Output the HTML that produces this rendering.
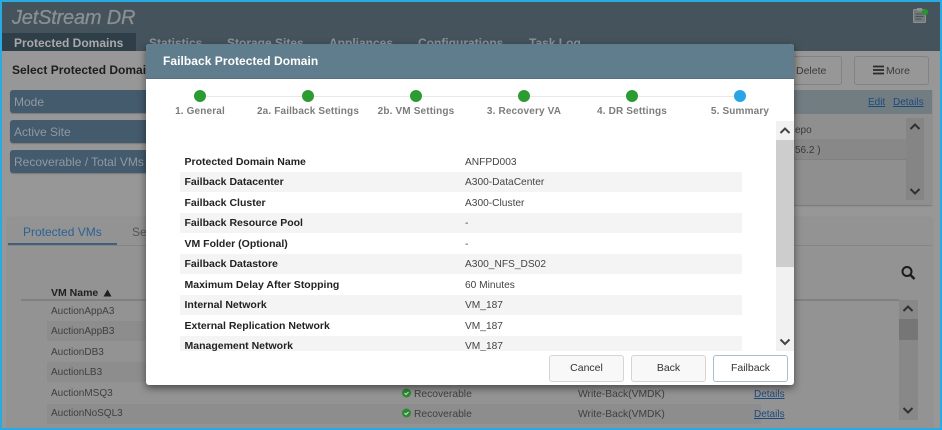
<!DOCTYPE html>
<html><head><meta charset="utf-8">
<style>
html,body{margin:0;padding:0;width:942px;height:430px;overflow:hidden;background:#979797}
body{font-family:"Liberation Sans",sans-serif;font-size:11px;color:#3a3a3a}
#w{position:absolute;left:0;top:0;width:942px;height:430px;overflow:hidden;background:#979797;filter:blur(.35px)}
.a{position:absolute;white-space:nowrap}
.bar{position:absolute;left:10px;width:140px;height:23px;background:#445a6d;border-radius:3px;color:#8f9aa3;font-size:12px;line-height:25px;padding-left:4px;box-sizing:border-box;box-shadow:0 1px 1px #7a7a7a}
.nav{position:absolute;top:36px;font-size:12px;font-weight:bold;color:#8a949a;white-space:nowrap}
.vm{position:absolute;left:51px;font-size:10px;color:#3f3f3f;white-space:nowrap}
.st{position:absolute;left:47px;width:714px;height:20px;background:#8d8d8d}
.lk{position:absolute;color:#1d4a7e;text-decoration:underline;font-size:10px;white-space:nowrap}
#modal{position:absolute;left:146px;top:44px;width:648px;height:341px;background:#fff;border-radius:3px;box-shadow:0 3px 8px rgba(0,0,0,.5);overflow:hidden}
#mh{position:absolute;left:0;top:0;width:648px;height:35px;background:#5f7d8c;border-bottom:1px solid #59717f;box-sizing:border-box;color:#fff;font-weight:bold;font-size:12px;line-height:34px;padding-left:17px;letter-spacing:.05px}
.dot{position:absolute;top:46px;width:12px;height:12px;border-radius:50%;background:#2e9b30}
.sl{position:absolute;top:62px;width:130px;text-align:center;font-size:10px;font-weight:bold;color:#7c7c7c;letter-spacing:.15px;white-space:nowrap}
#tb{position:absolute;left:34px;top:107px;width:562px;height:200px;overflow:hidden}
.r{position:absolute;left:0;width:562px;height:20px;line-height:20px;font-size:10.5px;white-space:nowrap}
.r.s{background:#f4f4f4}
.r b{position:absolute;left:4.5px;color:#222}
.r span{position:absolute;left:285px;top:1px;color:#444;font-size:10.2px}
.btn{position:absolute;top:311px;width:75px;height:27px;box-sizing:border-box;border:1px solid #d5d5d5;border-radius:3px;background:#f8f8f8;text-align:center;line-height:25px;font-size:10.5px;color:#333}
</style></head><body>
<div id="w">
<div class="a" style="left:0;top:0;width:942px;height:51px;background:#44535c"></div>
<div class="a" style="left:2px;top:33px;width:134px;height:18px;background:#2f3f49"></div>
<div class="a" style="left:12px;top:7px;font-size:20px;font-style:italic;color:#8b8f92;letter-spacing:-.2px;-webkit-text-stroke:.3px #8b8f92">JetStream DR</div>
<div class="nav" style="left:14px;color:#a9a9a9">Protected Domains</div>
<div class="nav" style="left:149px">Statistics</div>
<div class="nav" style="left:227px">Storage Sites</div>
<div class="nav" style="left:329px">Appliances</div>
<div class="nav" style="left:418px">Configurations</div>
<div class="nav" style="left:529px">Task Log</div>
<svg class="a" style="left:912px;top:7px" width="20" height="18" viewBox="0 0 20 18"><rect x="1.500" y="2.500" width="12" height="13" rx="1" fill="#74797c" stroke="#8c9092"/><rect x="5" y="1" width="5" height="3" fill="#8c9092"/><path d="M3.500 7h7M3.500 9.500h8M3.500 12h6" stroke="#45525a"/><circle cx="13" cy="5" r="3.200" fill="#2b9231"/></svg>

<div class="a" style="left:12px;top:63px;font-size:12px;font-weight:bold;color:#1d1d1d">Select Protected Domain</div>
<div class="bar" style="top:90px">Mode</div>
<div class="bar" style="top:120px">Active Site</div>
<div class="bar" style="top:150px">Recoverable / Total VMs</div>

<div class="a" style="left:780px;top:56px;width:62px;height:29px;border:1px solid #828282;border-radius:3px;box-sizing:border-box;font-size:10.500px;line-height:29px;padding-left:15px;color:#3b3b3b">Delete</div>
<div class="a" style="left:854px;top:56px;width:75px;height:29px;border:1px solid #828282;border-radius:3px;box-sizing:border-box;font-size:10.500px;line-height:29px;padding-left:31px;color:#3b3b3b">More</div>
<svg class="a" style="left:873px;top:65px" width="12" height="10"><path d="M0 1.500h11M0 5h11M0 8.500h11" stroke="#2a2a2a" stroke-width="1.700"/></svg>

<div class="a" style="left:790px;top:90px;width:142px;height:115px;background:#8f8f8f;box-shadow:0 1px 1px #777"></div>
<div class="a" style="left:790px;top:90px;width:142px;height:24px;background:#727d82"></div>
<div class="lk" style="left:868px;top:97px">Edit</div>
<div class="lk" style="left:893px;top:97px">Details</div>
<div class="a" style="left:795px;top:125px;font-size:10px;color:#3a3a3a">epo</div>
<div class="a" style="left:790px;top:139px;width:116px;height:20px;background:#888;border-bottom:1px solid #808080"></div>
<div class="a" style="left:795px;top:145px;font-size:10px;color:#3a3a3a">56.2 )</div>
<div class="a" style="left:906px;top:118px;width:18px;height:82px;background:#858585"></div>
<svg class="a" style="left:909px;top:122px" width="12" height="9"><path d="M1.500 7L6 2.500 10.500 7" fill="none" stroke="#303030" stroke-width="2"/></svg>
<svg class="a" style="left:909px;top:187px" width="12" height="9"><path d="M1.500 2L6 6.500 10.500 2" fill="none" stroke="#303030" stroke-width="2"/></svg>

<div class="a" style="left:8px;top:218px;width:924px;height:212px;background:#939393;box-shadow:0 0 2px #888"></div>
<div class="a" style="left:8px;top:245px;width:924px;height:1px;background:#858585"></div>
<div class="a" style="left:8px;top:243px;width:109px;height:2px;background:#3f5f7a"></div>
<div class="a" style="left:23px;top:225px;font-size:12px;color:#2b6296">Protected VMs</div>
<div class="a" style="left:132px;top:225px;font-size:12px;color:#555">Settings</div>
<svg class="a" style="left:899px;top:264px" width="18" height="18" viewBox="0 0 18 18"><circle cx="8" cy="7.500" r="4.500" fill="none" stroke="#1c1c1c" stroke-width="2"/><path d="M11.500 11l4 4" stroke="#1c1c1c" stroke-width="2.400"/></svg>
<div class="a" style="left:21px;top:299px;width:878px;height:2px;background:#808080"></div>
<div class="a" style="left:51px;top:287px;font-size:10.500px;font-weight:bold;color:#1f1f1f">VM Name</div>
<svg class="a" style="left:103px;top:289px" width="9" height="8"><path d="M4.500 .5L8.500 7.500H.5Z" fill="#1f1f1f"/></svg>
<div class="st" style="top:321px"></div>
<div class="st" style="top:362px"></div>
<div class="st" style="top:404px"></div>
<div class="vm" style="top:306px">AuctionAppA3</div>
<div class="vm" style="top:326px">AuctionAppB3</div>
<div class="vm" style="top:347px">AuctionDB3</div>
<div class="vm" style="top:367px">AuctionLB3</div>
<div class="vm" style="top:388px">AuctionMSQ3</div>
<div class="vm" style="top:408px">AuctionNoSQL3</div>
<div class="a" style="left:899px;top:300px;width:19px;height:120px;background:#888"></div>
<div class="a" style="left:899px;top:319px;width:19px;height:21px;background:#767676"></div>
<svg class="a" style="left:902px;top:304px" width="12" height="9"><path d="M1.500 7L6 2.500 10.500 7" fill="none" stroke="#303030" stroke-width="2"/></svg>
<svg class="a" style="left:902px;top:406px" width="12" height="9"><path d="M1.500 2L6 6.500 10.500 2" fill="none" stroke="#303030" stroke-width="2"/></svg>

<svg class="a" style="left:402px;top:388px" width="10" height="30"><circle cx="4.500" cy="5" r="4.500" fill="#2c8a33"/><circle cx="4.500" cy="25" r="4.500" fill="#2c8a33"/><path d="M2.500 5l1.500 1.500 2.500-2.500M2.500 25l1.500 1.500 2.500-2.500" fill="none" stroke="#d5e5d5" stroke-width="1"/></svg>
<div class="a" style="left:414px;top:389px;font-size:10.300px;color:#3f3f3f">Recoverable</div>
<div class="a" style="left:414px;top:409px;font-size:10.300px;color:#3f3f3f">Recoverable</div>
<div class="a" style="left:578px;top:389px;font-size:10.300px;color:#3f3f3f">Write-Back(VMDK)</div>
<div class="a" style="left:578px;top:409px;font-size:10.300px;color:#3f3f3f">Write-Back(VMDK)</div>
<div class="lk" style="left:754px;top:389px">Details</div>
<div class="lk" style="left:754px;top:409px">Details</div>

<div id="modal">
<div id="mh">Failback Protected Domain</div>
<div class="a" style="left:54px;top:52px;width:540px;height:1px;background:#e8e8e8"></div>
<div class="dot" style="left:48px"></div><div class="dot" style="left:156px"></div><div class="dot" style="left:264px"></div><div class="dot" style="left:372px"></div><div class="dot" style="left:480px"></div><div class="dot" style="left:588px;background:#29a4e6"></div>
<div class="sl" style="left:-11px">1. General</div>
<div class="sl" style="left:97px">2a. Failback Settings</div>
<div class="sl" style="left:205px">2b. VM Settings</div>
<div class="sl" style="left:313px">3. Recovery VA</div>
<div class="sl" style="left:421px">4. DR Settings</div>
<div class="sl" style="left:529px">5. Summary</div>
<div id="tb">
<div class="r" style="top:1px"><b>Protected Domain Name</b><span>ANFPD003</span></div>
<div class="r s" style="top:21px"><b>Failback Datacenter</b><span>A300-DataCenter</span></div>
<div class="r" style="top:42px"><b>Failback Cluster</b><span>A300-Cluster</span></div>
<div class="r s" style="top:62px"><b>Failback Resource Pool</b><span>-</span></div>
<div class="r" style="top:83px"><b>VM Folder (Optional)</b><span>-</span></div>
<div class="r s" style="top:103px"><b>Failback Datastore</b><span>A300_NFS_DS02</span></div>
<div class="r" style="top:124px"><b>Maximum Delay After Stopping</b><span>60 Minutes</span></div>
<div class="r s" style="top:144px"><b>Internal Network</b><span>VM_187</span></div>
<div class="r" style="top:165px"><b>External Replication Network</b><span>VM_187</span></div>
<div class="r s" style="top:185px"><b>Management Network</b><span>VM_187</span></div>
</div>
<div class="a" style="left:630px;top:77px;width:18px;height:230px;background:#f1f1f1"></div>
<div class="a" style="left:630px;top:96px;width:18px;height:127px;background:#cdcdcd"></div>
<svg class="a" style="left:633px;top:81px" width="12" height="10"><path d="M1.500 8L6 3.500 10.500 8" fill="none" stroke="#444" stroke-width="2"/></svg>
<svg class="a" style="left:633px;top:293px" width="12" height="10"><path d="M1.500 2.500L6 7 10.500 2.500" fill="none" stroke="#444" stroke-width="2"/></svg>
<div class="btn" style="left:403px">Cancel</div>
<div class="btn" style="left:485px">Back</div>
<div class="btn" style="left:567px;background:#fff;border-color:#a9bdd1">Failback</div>
</div>

<div class="a" style="left:0;top:0;width:942px;height:430px;box-sizing:border-box;border:2px solid #29abe2"></div>
</div>
</body></html>
